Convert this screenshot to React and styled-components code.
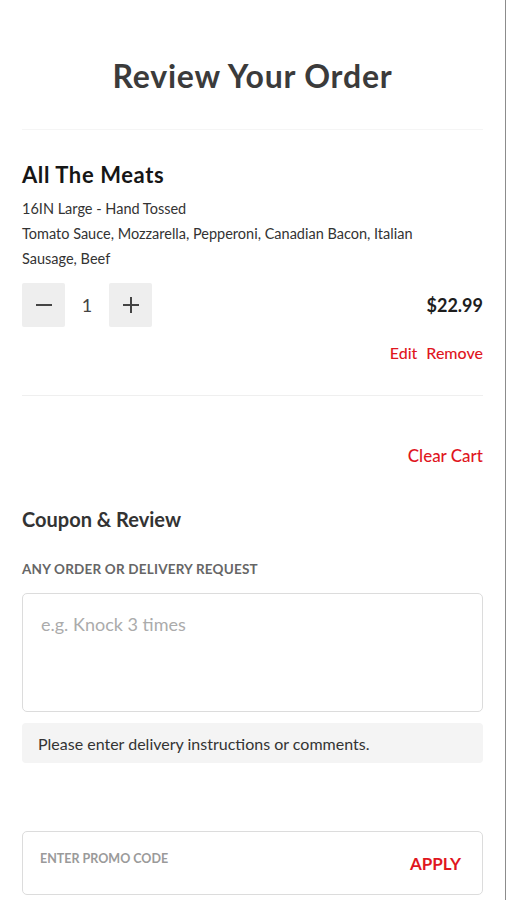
import React from "react";
import styled, { createGlobalStyle } from "styled-components";

const Global = createGlobalStyle`
  html, body { margin: 0; padding: 0; background: #fff; }
  body { font-family: Lato, "Noto Sans", Arial, sans-serif; -webkit-font-smoothing: antialiased; }
  * { box-sizing: border-box; }
`;

const Page = styled.div`
  width: 506px;
  min-height: 900px;
  border-right: 1px solid #8c8c8c;
  padding: 0 22px;
  display: flex;
  flex-direction: column;
`;

const Title = styled.h1`
  margin: 0;
  padding-top: 55px;
  height: 130px;
  text-align: center;
  font-size: 32px;
  letter-spacing: 0.8px;
  font-weight: 700;
  color: #3b3b3b;
  line-height: 42px;
  border-bottom: 1px solid #f5f5f5;
`;

const Item = styled.section`
  padding-top: 31px;
  padding-bottom: 33px;
  border-bottom: 1px solid #efefef;
  display: flex;
  flex-direction: column;
`;

const ItemName = styled.h2`
  margin: 0;
  font-size: 22px;
  letter-spacing: 0.6px;
  line-height: 28px;
  font-weight: 700;
  color: #161616;
`;

const Detail = styled.p`
  margin: 0;
  padding-right: 40px;
  font-size: 14.5px;
  line-height: 25px;
  color: #333;
  margin-top: ${(p) => p.$top || 0}px;
`;

const QtyRow = styled.div`
  margin-top: 12px;
  display: flex;
  align-items: center;
  justify-content: space-between;
`;

const Stepper = styled.div`
  display: flex;
  align-items: center;
`;

const StepBtn = styled.button`
  width: 43px;
  height: 44px;
  border: none;
  border-radius: 2px;
  background: #eeeeee;
  display: flex;
  align-items: center;
  justify-content: center;
  padding: 0;
  cursor: pointer;
`;

const Qty = styled.span`
  width: 44px;
  text-align: center;
  font-size: 18px;
  color: #444;
`;

const Price = styled.span`
  font-size: 18px;
  font-weight: 700;
  color: #1d1d1d;
`;

const Actions = styled.div`
  margin-top: 16px;
  display: flex;
  justify-content: flex-end;
  gap: 9px;
`;

const RedLink = styled.a`
  color: #e0161e;
  font-size: ${(p) => p.$size || 16}px;
  font-weight: 500;
  cursor: pointer;
  text-decoration: none;
`;

const ClearRow = styled.div`
  display: flex;
  justify-content: flex-end;
  padding-top: 49px;
  line-height: 22px;
`;

const SectionTitle = styled.h3`
  margin: 39px 0 0;
  font-size: 20px;
  line-height: 26px;
  font-weight: 700;
  color: #333;
`;

const Label = styled.div`
  margin-top: 28px;
  font-size: 13.5px;
  font-weight: 700;
  color: #666;
  letter-spacing: 0.2px;
  line-height: 18px;
`;

const TextArea = styled.textarea`
  margin-top: 15px;
  width: 100%;
  height: 119px;
  border: 1px solid #dcdcdc;
  border-radius: 5px;
  padding: 19px 18px;
  font-family: inherit;
  font-size: 18px;
  color: #333;
  resize: none;
  outline: none;
  &::placeholder { color: #ababab; }
`;

const Helper = styled.div`
  margin-top: 11px;
  background: #f4f4f4;
  border-radius: 4px;
  height: 40px;
  display: flex;
  align-items: center;
  padding: 0 16px;
  font-size: 16px;
  color: #333;
`;

const Promo = styled.div`
  margin-top: 68px;
  height: 64px;
  border: 1px solid #dcdcdc;
  border-radius: 5px;
  display: flex;
  justify-content: space-between;
  padding: 0 21px 0 17px;
`;

const PromoInput = styled.input`
  border: none;
  outline: none;
  align-self: flex-start;
  margin-top: 19px;
  font-family: inherit;
  font-size: 12.5px;
  font-weight: 700;
  color: #333;
  width: 260px;
  padding: 0;
  &::placeholder { color: #9a9a9a; }
`;

const ApplyBtn = styled.button`
  border: none;
  background: none;
  padding: 0;
  align-self: center;
  font-family: inherit;
  font-size: 17px;
  font-weight: 700;
  color: #e0161e;
  cursor: pointer;
`;

const Minus = () => (
  <svg width="18" height="18" viewBox="0 0 18 18">
    <path d="M1 9h16" stroke="#444" strokeWidth="2" />
  </svg>
);
const Plus = () => (
  <svg width="18" height="18" viewBox="0 0 18 18">
    <path d="M1 9h16M9 1v16" stroke="#444" strokeWidth="2" />
  </svg>
);

export default function App() {
  return (
    <>
      <Global />
      <Page>
        <Title>Review Your Order</Title>
        <Item>
          <ItemName>All The Meats</ItemName>
          <Detail $top={7}>16IN Large - Hand Tossed</Detail>
          <Detail>Tomato Sauce, Mozzarella, Pepperoni, Canadian Bacon, Italian Sausage, Beef</Detail>
          <QtyRow>
            <Stepper>
              <StepBtn aria-label="decrease"><Minus /></StepBtn>
              <Qty>1</Qty>
              <StepBtn aria-label="increase"><Plus /></StepBtn>
            </Stepper>
            <Price>$22.99</Price>
          </QtyRow>
          <Actions>
            <RedLink>Edit</RedLink>
            <RedLink>Remove</RedLink>
          </Actions>
        </Item>
        <ClearRow>
          <RedLink $size={17}>Clear Cart</RedLink>
        </ClearRow>
        <SectionTitle>Coupon &amp; Review</SectionTitle>
        <Label>ANY ORDER OR DELIVERY REQUEST</Label>
        <TextArea placeholder="e.g. Knock 3 times" />
        <Helper>Please enter delivery instructions or comments.</Helper>
        <Promo>
          <PromoInput placeholder="ENTER PROMO CODE" />
          <ApplyBtn>APPLY</ApplyBtn>
        </Promo>
      </Page>
    </>
  );
}
